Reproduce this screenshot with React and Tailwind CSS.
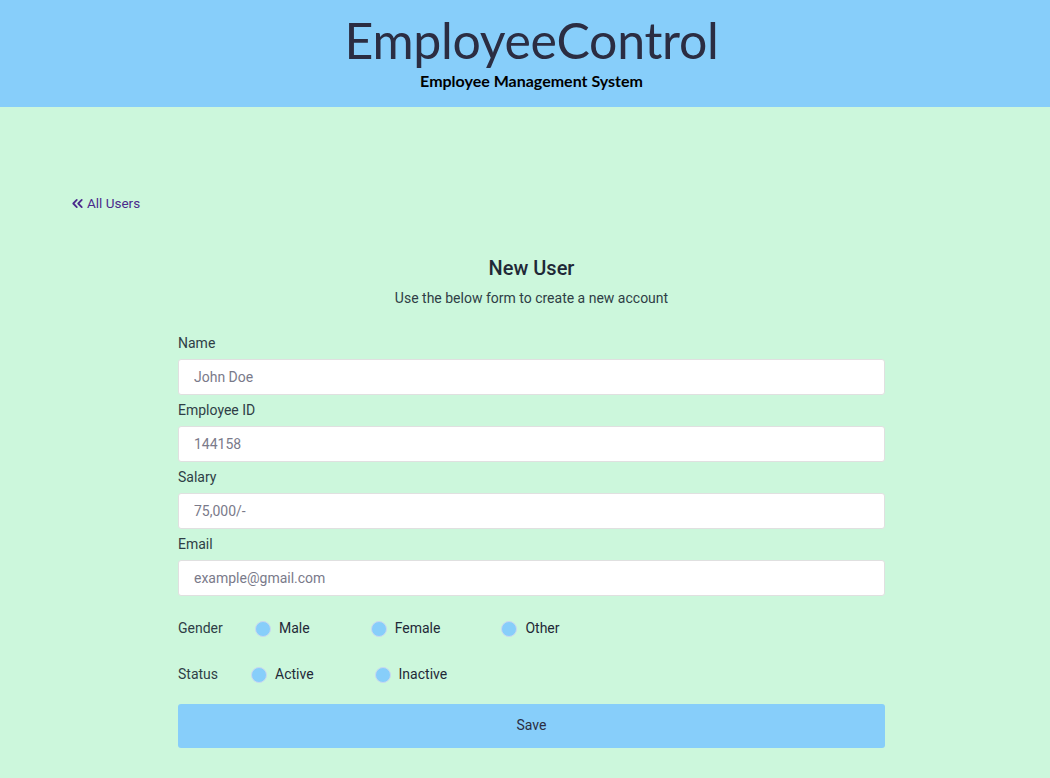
import { ChevronsLeft } from 'lucide-react';

const fields = [
  { label: 'Name', placeholder: 'John Doe' },
  { label: 'Employee ID', placeholder: '144158' },
  { label: 'Salary', placeholder: '75,000/-' },
  { label: 'Email', placeholder: 'example@gmail.com' },
];

const Radio = ({ label, name, last }) => (
  <label className={`flex items-center ${last ? '' : 'mr-[61px]'}`}>
    <span className="w-[16px] h-[16px] rounded-full bg-[#87cefa] border border-[#c9d8f0] mr-[8px]" />
    <span className="text-[#1f2937]">{label}</span>
    <input type="radio" name={name} className="hidden" />
  </label>
);

export default function App() {
  return (
    <div className="min-h-[778px] bg-[#ccf7dc] font-['Roboto',sans-serif] text-[14px] text-[#2f3e46]">
      {/* Cabecera */}
      <header className="h-[107px] bg-[#87cefa] flex flex-col items-center pl-[13px]">
        <h1 className="font-['Lato',sans-serif] text-[50px] leading-none text-[#2b2d42] mt-[15px] tracking-[-0.3px]">
          EmployeeControl
        </h1>
        <p className="font-['Lato',sans-serif] font-bold text-[16px] text-black mt-[4px]">
          Employee Management System
        </p>
      </header>

      <div className="pt-[86px] pl-[69px]">
        <a href="#" className="inline-flex items-center text-[13.5px] text-[#4b2a8c]">
          <ChevronsLeft className="w-[17px] h-[17px] mr-[1px]" strokeWidth={2.5} />
          All Users
        </a>
      </div>

      <div className="ml-[178px] w-[707px] pt-[38px] pb-[30px]">
        <div className="text-center">
          <h2 className="text-[20px] font-medium text-[#1f2937] leading-[24px]">New User</h2>
          <p className="mt-[8px] text-[14px] text-[#2f3e46]">Use the below form to create a new account</p>
        </div>

        <form className="mt-[24px]" onSubmit={(e) => e.preventDefault()}>
          {fields.map((f) => (
            <div key={f.label} className="mb-[5px]">
              <label className="block text-[14px] leading-[20px] mb-[6px] text-[#2f3e46]">{f.label}</label>
              <input
                placeholder={f.placeholder}
                className="w-full h-[36px] bg-white border border-[#e0e0e0] rounded-[3px] px-[15px] text-[14px] placeholder:text-[#7a7a8a] outline-none"
              />
            </div>
          ))}

          <div className="flex items-center mt-[23px] h-[20px]">
            <span className="w-[77px]">Gender</span>
            <Radio label="Male" name="gender" />
            <Radio label="Female" name="gender" />
            <Radio label="Other" name="gender" last />
          </div>

          <div className="flex items-center mt-[26px] h-[20px]">
            <span className="w-[73px]">Status</span>
            <Radio label="Active" name="status" />
            <Radio label="Inactive" name="status" last />
          </div>

          <button
            type="submit"
            className="mt-[19px] w-full h-[44px] bg-[#87cefa] rounded-[3px] text-[14px] text-[#2b2d42]"
          >
            Save
          </button>
        </form>
      </div>
    </div>
  );
}
